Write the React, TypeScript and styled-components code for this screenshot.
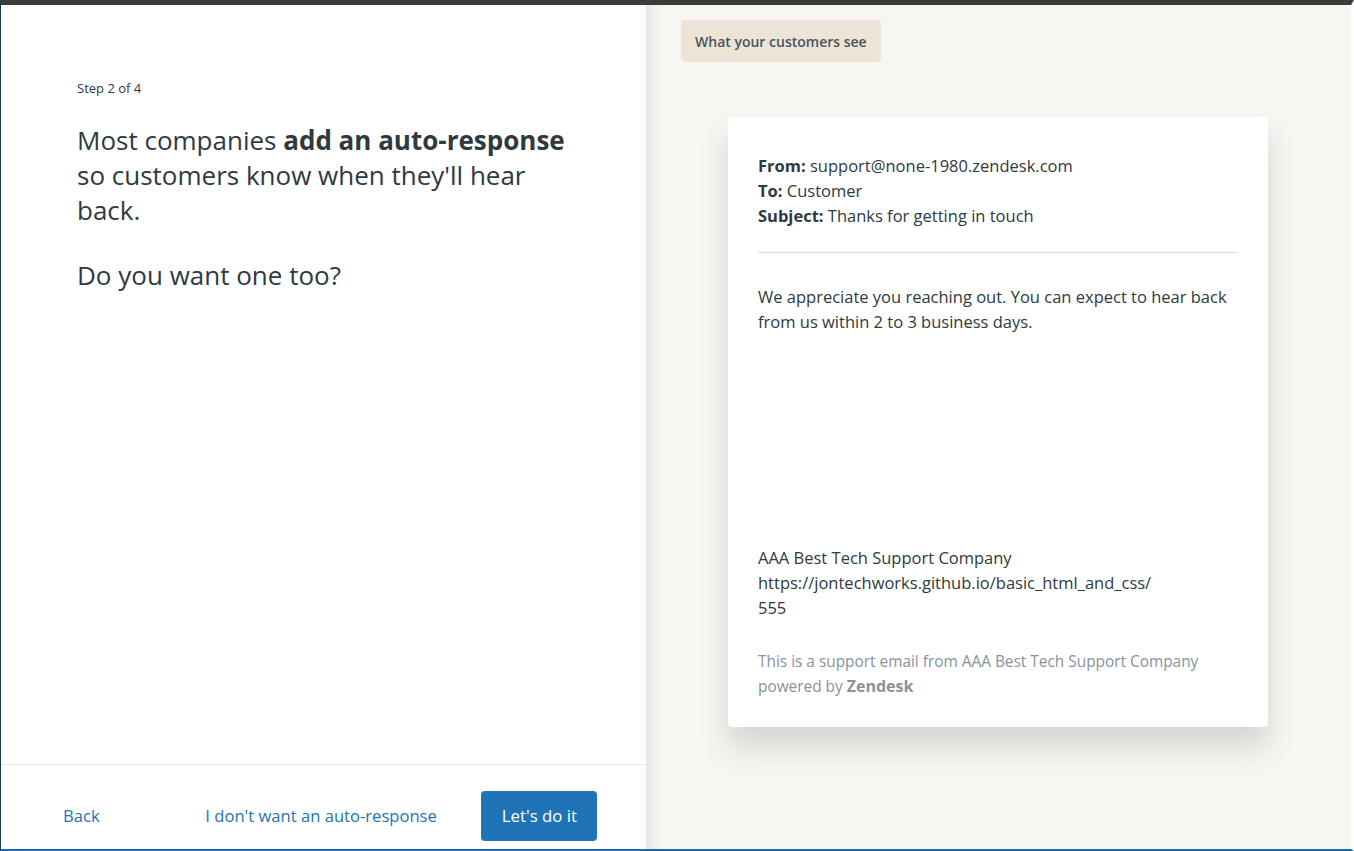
import React from "react";
import styled, { createGlobalStyle } from "styled-components";

const GlobalStyle = createGlobalStyle`
  html, body { margin: 0; padding: 0; }
  body {
    font-family: "Open Sans", "Noto Sans", "Liberation Sans", sans-serif;
    color: #2f3941;
    background: #ffffff;
  }
  * { box-sizing: border-box; }
`;

const Frame = styled.div`
  width: 1354px;
  height: 851px;
  display: flex;
  border-top: 5px solid #3b3b3b;
  border-left: 1px solid #123c44;
  border-right: 3px solid #ffffff;
  border-bottom: 2px solid #1f6aa8;
  overflow: hidden;
`;

const LeftPanel = styled.section`
  width: 645px;
  flex: none;
  display: flex;
  flex-direction: column;
  background: #ffffff;
`;

const Intro = styled.div`
  flex: 1;
  padding: 74px 76px 0 76px;
`;

const StepLabel = styled.div`
  font-size: 13px;
  line-height: 18px;
  color: #2f3941;
  margin-bottom: 26px;
`;

const Lead = styled.p`
  margin: 0;
  font-size: 26px;
  line-height: 35px;
  font-weight: 400;
  max-width: 500px;
  & + & { margin-top: 30px; }
  b { font-weight: 700; }
`;

const Footer = styled.footer`
  height: 85px;
  border-top: 1px solid #e9ebed;
  display: flex;
  align-items: center;
  padding: 17px 49px 0 62px;
`;

const LinkButton = styled.button`
  border: none;
  background: none;
  padding: 0;
  font: inherit;
  font-size: 16.6px;
  color: #1f73b7;
  cursor: pointer;
`;

const Actions = styled.div`
  margin-left: auto;
  display: flex;
  align-items: center;
  gap: 44px;
`;

const PrimaryButton = styled.button`
  height: 50px;
  padding: 0 20px 0 21px;
  border: none;
  border-radius: 4px;
  background: #1f73b7;
  color: #ffffff;
  font: inherit;
  font-size: 16.8px;
  cursor: pointer;
`;

const RightPanel = styled.section`
  flex: 1;
  background: #f7f6f2;
  box-shadow: inset 14px 0 14px -10px rgba(0, 0, 0, 0.09);
  padding: 15px 0 0 35px;
  display: flex;
  flex-direction: column;
  align-items: flex-start;
`;

const Badge = styled.div`
  height: 42px;
  padding: 0 14px;
  display: flex;
  align-items: center;
  border-radius: 4px;
  background: #ede4d8;
  color: #49545c;
  font-size: 14px;
  font-weight: 600;
`;

const Card = styled.article`
  margin: 55px 0 0 47px;
  width: 540px;
  height: 610px;
  background: #ffffff;
  border-radius: 4px;
  box-shadow: 0 20px 30px rgba(40, 36, 30, 0.16);
  padding: 36px 30px 0 30px;
  display: flex;
  flex-direction: column;
  font-size: 16.5px;
  line-height: 25px;
  color: #2f3941;
`;

const HeaderRow = styled.div`
  b { font-weight: 700; }
`;

const Divider = styled.hr`
  border: none;
  border-top: 1px solid #d8dcde;
  margin: 24px 0 31px 0;
`;

const BodyText = styled.p`
  margin: 0;
`;

const Signature = styled.div`
  margin-top: 211px;
`;

const Fine = styled.div`
  margin-top: 29px;
  font-size: 15.4px;
  color: #87929d;
  b { font-weight: 700; font-size: 16px; }
`;

export default function App() {
  return (
    <>
      <GlobalStyle />
      <Frame>
        <LeftPanel>
          <Intro>
            <StepLabel>Step 2 of 4</StepLabel>
            <Lead>
              Most companies <b>add an auto-response</b> so customers know when they'll hear back.
            </Lead>
            <Lead>Do you want one too?</Lead>
          </Intro>
          <Footer>
            <LinkButton>Back</LinkButton>
            <Actions>
              <LinkButton>I don't want an auto-response</LinkButton>
              <PrimaryButton>Let's do it</PrimaryButton>
            </Actions>
          </Footer>
        </LeftPanel>
        <RightPanel>
          <Badge>What your customers see</Badge>
          <Card>
            <HeaderRow><b>From:</b> support@none-1980.zendesk.com</HeaderRow>
            <HeaderRow><b>To:</b> Customer</HeaderRow>
            <HeaderRow><b>Subject:</b> Thanks for getting in touch</HeaderRow>
            <Divider />
            <BodyText>
              We appreciate you reaching out. You can expect to hear back from us within 2 to 3 business days.
            </BodyText>
            <Signature>
              <div>AAA Best Tech Support Company</div>
              <div>https://jontechworks.github.io/basic_html_and_css/</div>
              <div>555</div>
            </Signature>
            <Fine>
              This is a support email from AAA Best Tech Support Company
              <br />
              powered by <b>Zendesk</b>
            </Fine>
          </Card>
        </RightPanel>
      </Frame>
    </>
  );
}
